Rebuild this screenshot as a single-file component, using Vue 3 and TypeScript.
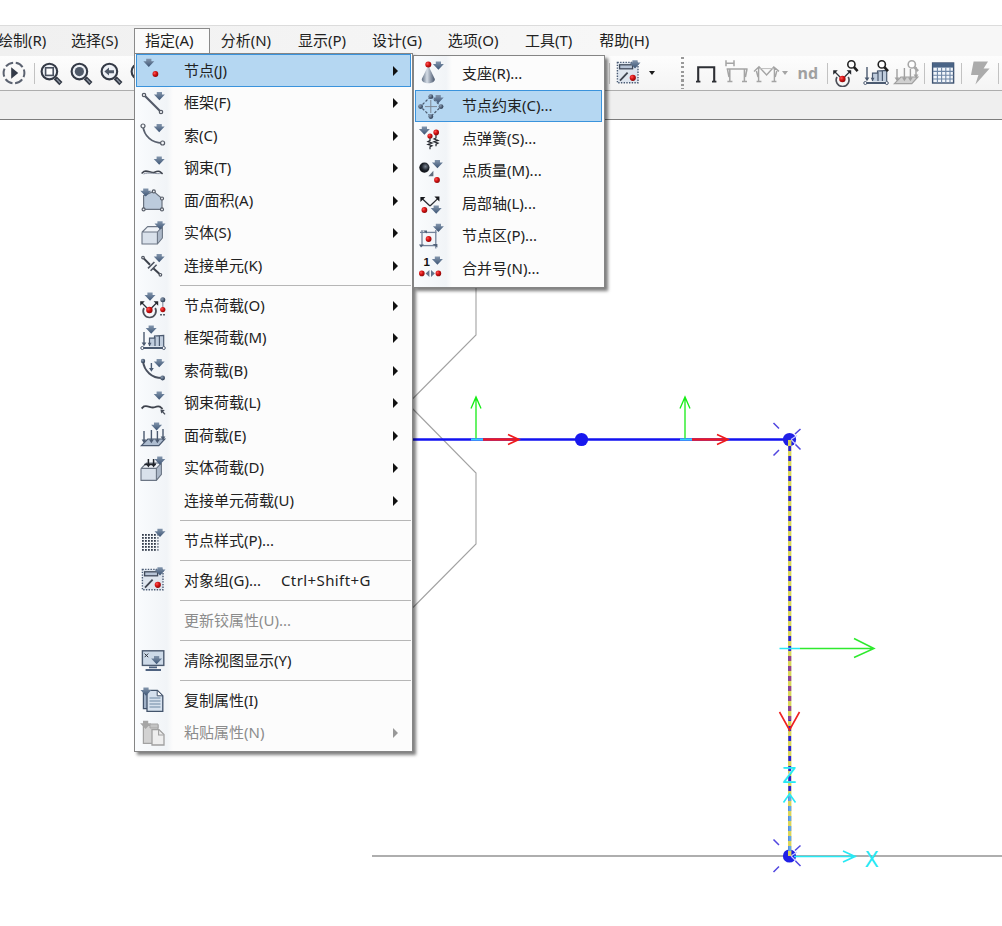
<script setup lang="ts">
import { defineComponent, h } from 'vue'

interface MenuEntry {
  label?: string
  icon?: string
  arrow?: boolean
  active?: boolean
  disabled?: boolean
  shortcut?: string
  separator?: boolean
}

const down = (x: number, y: number, fill = 'url(#arrowFill)'): string =>
  `<path d="M${x - 2.6} ${y - 4}h5.2v2.4h2.9l-5.5 5.8l-5.5-5.8h2.9z" fill="${fill}"/>`
const red = (x: number, y: number, r = 2.9): string =>
  `<circle cx="${x}" cy="${y}" r="${r}" fill="url(#redBall)"/>`
const dark = (x: number, y: number, r = 2.2): string =>
  `<circle cx="${x}" cy="${y}" r="${r}" fill="url(#darkBall)"/>`
const ring = (x: number, y: number, r = 1.7): string =>
  `<circle cx="${x}" cy="${y}" r="${r}" fill="#f4f6f9" stroke="#555b66" stroke-width="1.2"/>`
const line = (d: string, color = '#4c5360', w = 1.4, extra = ''): string =>
  `<path d="${d}" fill="none" stroke="${color}" stroke-width="${w}" ${extra}/>`
const loadArrow = (x: number, y1: number, y2: number, c = '#4b5c74'): string =>
  line(`M${x} ${y1}V${y2 - 2}`, c, 1.4) +
  `<path d="M${x - 2.4} ${y2 - 3.6}h4.8l-2.4 3.8z" fill="${c}"/>`
const lens = (x: number, y: number, c = '#222', r = 3.6): string =>
  `<circle cx="${x}" cy="${y}" r="${r}" fill="#fff" stroke="${c}" stroke-width="1.6"/>` +
  line(`M${x + 2.6} ${y + 2.8}l3.6 4`, c, 2.6)
const zoomLens = (inner: string): string =>
  line('M18.3 19l5.6 5.6', '#343a46', 4.4) +
  line('M19.6 20l3.6 3.8', '#8f97a5', 1.2) +
  `<circle cx="12.4" cy="12.6" r="7.8" fill="#eef1f6" stroke="#343a46" stroke-width="2.1"/>${inner}`

const group =
  '<rect x="3.4" y="3.4" width="20.6" height="20.4" fill="#dfe6ef" stroke="#4a5b74" stroke-width="1.4" stroke-dasharray="1.4 1.3"/>' +
  '<rect x="5.6" y="5.8" width="13" height="4" fill="#b7c4d6" stroke="#414b5b" stroke-width="1.3"/>' +
  line('M6 21.6l7.6-8', '#3e444f', 1.8) + red(18.8, 18.8, 3.1) + down(21, 5.2)

const curve = 'M4 5C5 15 13 22.5 24 22'
const wave = 'M2.6 19.5L5 17.4C9 15.8 12 19.8 15.6 18.2S20 17.4 21 17.7l2.6 2.2'
const jointLoad = (y = 0): string =>
  line(`M5 ${17 + y}a6.4 6.4 0 1 0 11.2 0`, '#4c4f58', 1.7) +
  line(`M8 ${17 + y}L3 ${12 + y}M12.5 ${17 + y}l5-5`, '#30343c', 1.3) +
  `<path d="M1.2 ${10.2 + y}h4.6l-4.6 4.6zM19.2 ${10.2 + y}h-4.6l4.6 4.6z" fill="#24272d"/>` +
  red(10.4, 19 + y, 3.2)

const frameLoad = (c: string, f: string): string =>
  `<path d="M10.5 22.6v-8.8h5v-2.3h9.2v11.1z" fill="${f}"/>` +
  line('M10.5 22V14.2h5V12l9.2-.6V22M16 13v9M20.4 12v10', c, 1.2) +
  loadArrow(5, 8, 22, c) + `<path d="M8.7 18.8h3.8l-1.9 3.4z" fill="${c}"/>` +
  line('M3 24h22', c, 2) +
  `<circle cx="3.3" cy="24" r="1.5" fill="#fff" stroke="${c}"/><circle cx="24.8" cy="24" r="1.5" fill="#fff" stroke="${c}"/>`

const areaLoad = (c: string, f: string): string =>
  `<path d="M2.4 24.6L8.8 18h17l-6 6.6z" fill="${f}" stroke="${c}" stroke-width="1.2"/>` +
  loadArrow(5, 10, 22, c) + loadArrow(12.4, 9, 22, c) + loadArrow(18.4, 10, 22, c) + loadArrow(24, 8, 19, c)

const cube =
  '<path d="M3 13L8.6 7.6H23.4L18.4 13z" fill="#eef2f7"/><path d="M18.4 13L23.4 7.6V19l-5 6z" fill="#adb9c9"/>' +
  '<rect x="3" y="13" width="15.4" height="12" rx="1" fill="#d9e1eb"/>' +
  line('M3 13.4V25h15.4V13H3.2L8.6 7.6H23.4V19l-5 6M18.4 13l5-5.4', '#6b7584', 1.1, 'stroke-linejoin="round"')

const dots = ((): string => {
  let out = ''
  for (let r = 0; r < 6; r++)
    for (let c = 0; c < 6; c++)
      out += `<rect x="${3 + c * 3}" y="${8 + r * 3}" width="1.8" height="1.8" fill="${c === 5 ? '#8d96a2' : '#343d4c'}"/>`
  return out
})()

const icons: Record<string, string> = {
  joint: down(9.8, 6.8) + red(16.4, 18),
  frame: line('M5 6L22 23', '#535a68', 2.2) + ring(5, 6) + ring(22, 23) + down(20.4, 7),
  cable: line(curve, '#59606e', 1.8) + ring(4, 5, 2) + ring(23.6, 22, 2) + down(20.2, 7),
  tendon: line(wave, '#3e434d', 1.6) + line('M4.5 20C9 17.8 18 20.4 22 19.4', '#8991a0', 1) + down(20.2, 6.6),
  area: '<path d="M4.6 23.4V9.6L14.6 5.4L23 12.5V23.4z" fill="#bccbdc" stroke="#69727f" stroke-width="1.2"/>' + ring(4.6, 23.4, 1.5) + ring(14.8, 5.4, 1.5) + ring(23, 12.5, 1.5) + ring(23, 23.4, 1.5) + down(6.8, 6.4),
  solid: cube + down(21, 6.2),
  link: line('M4 6.6L11 13.8M14 17L21.4 23.8', '#3d424c', 2) + line('M9 17.4l6.4-6.4M11.6 19.8l6-6', '#4f5663', 1.6) + ring(4, 6.6, 1.3) + ring(21.4, 23.8, 1.3) + down(20.2, 7),
  jointLoad: jointLoad() + down(11, 5.6) + line('M23.8 9v10', '#9098a5', 1.2) + dark(23.8, 8.8, 2.5) + red(23.8, 18.6, 2.6) + line('M21 23.8h5.6', '#59606b', 1.4, 'stroke-dasharray="2 1"'),
  frameLoad: frameLoad('#4b5a70', '#c0cddd') + down(12.2, 5.6),
  cableLoad: line(curve, '#4a515f', 2) + dark(4, 5, 2.2) + dark(23.6, 22, 2.4) + loadArrow(12.4, 7, 15.6) + down(20.2, 7),
  tendonLoad: line(wave, '#3e434d', 1.8) + line('M26 25.4l-3-3.4', '#444b57', 1.3) + '<path d="M21.4 20.4l4.4.6-3.6 3.6z" fill="#444b57"/>' + down(20.2, 6.6),
  areaLoad: areaLoad('#4b5a70', '#aebdd0') + down(17.6, 5.4),
  solidLoad: `<g transform="translate(-1 1.4)">${cube}</g>` + line('M5.4 10.6h11.4M9.4 5v5M14.6 5v5', '#20242b', 1.5) + '<path d="M6.8 9.4h5.2l-2.6 4.2zM12 9.4h5.2l-2.6 4.2z" fill="#20242b"/>' + down(20.8, 6.6),
  pattern: dots + down(21, 6.8),
  group,
  clear:
    '<rect x="3.4" y="4.8" width="21.4" height="14.6" fill="#cddae8" stroke="#4a596e" stroke-width="1.4"/>' +
    line('M5.6 7.6l3.6 3.6M9.2 7.6l-3.6 3.6', '#2e343e', 1) +
    line('M10 21.4h8M6.6 24h15.4', '#4e6280', 1.8) + down(17.6, 14),
  copy:
    '<path d="M4.4 6h11v16.6h-11z" fill="#9fb0c6" stroke="#42536b" stroke-width="1.2"/>' +
    '<path d="M8 4.4h10.4l5.4 5.4V25.4H8z" fill="#d5e0ed" stroke="#42536b" stroke-width="1.3"/>' +
    line('M10.5 12h11M10.5 15h11M10.5 18h11M10.5 21h11', '#6e87a4', 1.2) + '<path d="M18.2 4.4v5.4h5.6z" fill="#fff" stroke="#42536b"/>' + down(7, 5.6),
  paste:
    '<path d="M4.4 6.4H19v18H4.4z" fill="#d2d2d2" stroke="#a2a2a2" stroke-width="1.2"/><path d="M11 5h8v4h-8z" fill="#c4c4c4" stroke="#a6a6a6"/>' +
    '<path d="M13 10.6h7l5 5V26H13z" fill="#eee" stroke="#a0a0a0" stroke-width="1.3"/>' + line('M19.6 10.6v5.4h5', '#a0a0a0', 1.1) + down(6.6, 5.8, '#a6a6a6'),
  support:
    '<path d="M11.3 6.4L17.8 20C18.6 25.6 4 25.6 4.8 20z" fill="url(#cone)"/>' + red(11.3, 5.6, 3) + down(21.4, 6.6),
  constraint:
    line('M13.8 4.4L24 14.6L13.8 24.6L3.4 14.6z', '#4d5c70', 1.2, 'stroke-dasharray="2.6 1.6"') + line('M13.8 8v13M8 14.6h12', '#7d8793', 1) +
    dark(13.8, 4.6, 2.4) + dark(3.6, 14.6, 2.4) + dark(24, 14.6, 2.4) + dark(13.8, 24.6, 2.4) + down(21.2, 7),
  spring:
    line('M13 13v3.6l-2 1 4 1.4-4 1.4 4 1.4-2 1v2.4M19 9v5l-2 1 4 1.4-4 1.4 4 1.4-2 1v2', '#24272d', 1.2) + red(13, 12, 2.6) + red(19.2, 8.4, 2.8) + down(7.4, 6.6),
  mass: '<circle cx="7.4" cy="10.6" r="5.1" fill="url(#blackBall)"/><path d="M16.4 13.8v5.4h-5z" fill="#5f6b7c"/>' + red(20, 23) + down(20.4, 7),
  axis: line('M13 17L5 9.6M13 17l8-7.6', '#292c32', 1.3) + '<path d="M3.4 8h5l-5 5zM22.4 7.6h-5l5 5z" fill="#16181c"/>' + red(7.4, 21) + down(19.2, 20.6),
  panel:
    '<rect x="5" y="10.4" width="13.8" height="13.2" fill="#f3f6fa" stroke="#74839a" stroke-width="1.3"/>' +
    line('M18.8 23.6v3M5 8v2.4M18.8 8v3M3 10.4h3', '#74839a', 1.2) + '<path d="M2 22.6h5l-3 3zM6 8.4h4v3zM15.4 22h5v3.4z" fill="#516178"/>' + red(11.6, 17) + down(21.4, 5.8),
  merge:
    '<text x="6.4" y="11.6" font-family="Liberation Sans" font-weight="700" font-size="11.5" fill="#111">1</text>' +
    red(4.8, 19.4, 2.8) + red(21.4, 19.4, 2.8) + '<path d="M12.4 16v7l-3.8-3.5zM14 16v7l3.8-3.5z" fill="#62748c"/>' + down(20.4, 6.6),
  play:
    '<circle cx="14" cy="14" r="10.4" fill="none" stroke="#5b6270" stroke-width="2" stroke-dasharray="8.2 2.7" stroke-dashoffset="4"/><path d="M11.2 8.2l7 5.8-7 5.8z" fill="#343b48"/>',
  zoomRect: zoomLens('<rect x="8.6" y="8.8" width="7.6" height="7.6" fill="#fff" stroke="#4b5361" stroke-width="1.6"/>'),
  zoomAll: zoomLens('<circle cx="12.4" cy="12.6" r="4.6" fill="#505a69"/>'),
  zoomBack: zoomLens('<path d="M7.4 12.6l4.6-4v2.6h5v3h-5v2.4z" fill="#505a69"/>'),
  portal: line('M6.2 22V8.2h16V22', '#2d2f34', 2.1) + line('M4 22.6h4.4M20 22.6h4.4', '#2d2f34', 1.6),
  portalGray: line('M4 1.2v6M12 1.2v6M4 4.2h8M4.6 10h21M7.8 10v12M22.4 10v12M5.4 10l1.6 8M25 10l-1.6 8', '#a4a4a4', 1.5) + line('M5.4 22.6h5M20 22.6h5', '#a4a4a4', 1.5),
  momentGray: line('M2 12.4l5-4.6L14.6 16l7.2-8L27 12.4M6.6 8.6v13.4M22.4 8.6v13.4M4.4 12l1.6 6M24.8 12l-1.6 6', '#a4a4a4', 1.4) + line('M7 9.6h15', '#bcbcbc', 1) + line('M4.6 22.6h4.8M19.6 22.6h4.8', '#a4a4a4', 1.5),
  showJoint: jointLoad(1) + lens(19.4, 5.4),
  showFrame: frameLoad('#4b5a70', '#c0cddd') + lens(19.8, 5.4),
  showArea: areaLoad('#a0a0a0', '#d0d0d0') + lens(19.8, 5.4, '#a8a8a8'),
  table:
    '<rect x="3.6" y="4" width="21" height="20" fill="#f2f6fb" stroke="#3d5270" stroke-width="1.4"/><rect x="3.6" y="4" width="21" height="4.6" fill="#4a6486"/>' +
    line('M8.4 8.6V24M12.6 8.6V24M16.8 8.6V24M21 8.6V24M4 12.4h20.4M4 16.2h20.4M4 20h20.4', '#6f87a6', 1.1),
  bolt: '<path d="M7.6 2.4H22L17.6 9.6H23.6L9.4 25.4L12.4 16H5z" fill="#ababab"/>',
}

const Icon = defineComponent({
  props: { name: { type: String, required: true } },
  setup(props) {
    return () => h('svg', { width: 28, height: 28, viewBox: '0 0 28 28', innerHTML: icons[props.name] ?? '' })
  },
})

const menubar: string[] = ['绘制(R)', '选择(S)', '指定(A)', '分析(N)', '显示(P)', '设计(G)', '选项(O)', '工具(T)', '帮助(H)']

const assignMenu: MenuEntry[] = [
  { label: '节点(J)', icon: 'joint', arrow: true, active: true },
  { label: '框架(F)', icon: 'frame', arrow: true },
  { label: '索(C)', icon: 'cable', arrow: true },
  { label: '钢束(T)', icon: 'tendon', arrow: true },
  { label: '面/面积(A)', icon: 'area', arrow: true },
  { label: '实体(S)', icon: 'solid', arrow: true },
  { label: '连接单元(K)', icon: 'link', arrow: true },
  { separator: true },
  { label: '节点荷载(O)', icon: 'jointLoad', arrow: true },
  { label: '框架荷载(M)', icon: 'frameLoad', arrow: true },
  { label: '索荷载(B)', icon: 'cableLoad', arrow: true },
  { label: '钢束荷载(L)', icon: 'tendonLoad', arrow: true },
  { label: '面荷载(E)', icon: 'areaLoad', arrow: true },
  { label: '实体荷载(D)', icon: 'solidLoad', arrow: true },
  { label: '连接单元荷载(U)', arrow: true },
  { separator: true },
  { label: '节点样式(P)...', icon: 'pattern' },
  { separator: true },
  { label: '对象组(G)...', icon: 'group', shortcut: 'Ctrl+Shift+G' },
  { separator: true },
  { label: '更新铰属性(U)...', disabled: true },
  { separator: true },
  { label: '清除视图显示(Y)', icon: 'clear' },
  { separator: true },
  { label: '复制属性(I)', icon: 'copy' },
  { label: '粘贴属性(N)', icon: 'paste', arrow: true, disabled: true },
]

const jointMenu: MenuEntry[] = [
  { label: '支座(R)...', icon: 'support' },
  { label: '节点约束(C)...', icon: 'constraint', active: true },
  { label: '点弹簧(S)...', icon: 'spring' },
  { label: '点质量(M)...', icon: 'mass' },
  { label: '局部轴(L)...', icon: 'axis' },
  { label: '节点区(P)...', icon: 'panel' },
  { label: '合并号(N)...', icon: 'merge' },
]

const localAxes: number[] = [476, 685]
const endNodes: number[] = [439.5, 856]
</script>

<template>
  <div class="window">
    <svg class="defs" width="0" height="0">
      <defs>
        <linearGradient id="arrowFill" x1="0" y1="0" x2="0" y2="1"><stop offset="0" stop-color="#8396ad" /><stop offset="1" stop-color="#3c5474" /></linearGradient>
        <radialGradient id="redBall" cx=".35" cy=".35" r=".7"><stop offset="0" stop-color="#f55" /><stop offset=".5" stop-color="#d31212" /><stop offset="1" stop-color="#8a0808" /></radialGradient>
        <radialGradient id="darkBall" cx=".35" cy=".35" r=".7"><stop offset="0" stop-color="#8b9cb2" /><stop offset="1" stop-color="#26364c" /></radialGradient>
        <radialGradient id="blackBall" cx=".6" cy=".4" r=".6"><stop offset="0" stop-color="#7b8593" /><stop offset=".6" stop-color="#1d222b" /><stop offset="1" stop-color="#0c0f14" /></radialGradient>
        <linearGradient id="cone"><stop offset="0" stop-color="#5f6e82" /><stop offset=".4" stop-color="#d4dce6" /><stop offset="1" stop-color="#46546a" /></linearGradient>
      </defs>
    </svg>

    <div class="caption"></div>
    <nav class="menubar">
      <span v-for="(name, i) in menubar" :key="name" class="top-item" :class="{ open: i === 2 }">{{ name }}</span>
    </nav>
    <div class="toolbar">
      <div class="tools left">
        <Icon name="play" class="tool" />
        <i class="divider"></i>
        <Icon name="zoomRect" class="tool" />
        <Icon name="zoomAll" class="tool" />
        <Icon name="zoomBack" class="tool" />
        <Icon name="zoomAll" class="tool" />
      </div>
      <div class="tools right">
        <i class="divider"></i>
        <Icon name="group" class="tool" />
        <span class="drop"><i class="caret"></i></span>
        <span class="grip"></span>
        <Icon name="portal" class="tool" />
        <Icon name="portalGray" class="tool" />
        <Icon name="momentGray" class="tool" />
        <i class="caret gray"></i>
        <b class="nd">nd</b>
        <i class="divider"></i>
        <Icon name="showJoint" class="tool" />
        <Icon name="showFrame" class="tool" />
        <Icon name="showArea" class="tool" />
        <i class="divider"></i>
        <Icon name="table" class="tool" />
        <i class="divider"></i>
        <Icon name="bolt" class="tool" />
        <i class="divider"></i>
      </div>
    </div>
    <div class="tabstrip"></div>

    <svg class="model" width="1002" height="806" viewBox="0 120 1002 806" fill="none">
      <path d="M476 280V335L408 403.500M408 404L476 473V544L413 607.500" stroke="#a2a2a2" stroke-width="1.1" />
      <path d="M372 856H1002" stroke="#939393" stroke-width="1.5" />
      <path d="M408 439.500H790" stroke="#1212f0" stroke-width="2.500" />
      <circle cx="581.500" cy="439.500" r="6.600" fill="#1818ee" />
      <g v-for="x in localAxes" :key="x">
        <path :d="`M${x} 439V398M${x - 5} 408.500L${x} 397L${x + 5} 408.500`" stroke="#16ec16" stroke-width="1.300" />
        <path :d="`M${x - 5} 439.500H${x + 7}`" stroke="#3cf" stroke-width="2" />
        <path :d="`M${x + 7} 439.500H${x + 42}`" stroke="#ee1822" stroke-width="2.600" />
        <path :d="`M${x + 32} 434.500L${x + 43} 439.500L${x + 32} 444.500`" stroke="#f01818" stroke-width="1.600" />
      </g>
      <g v-for="y in endNodes" :key="y">
        <circle cx="789.500" :cy="y" r="6.600" fill="#2020e6" />
        <path :d="`M791 ${y}L797 ${y - 4}M791 ${y}L796 ${y + 5}`" stroke="#c9c9ff" stroke-width="1.200" />
        <path :d="`M773.500 ${y - 16.500}l5.500 5.500M773.500 ${y + 16}l5.500-5.500M800.500 ${y - 10.500}l-5.500 5M800.500 ${y + 10}l-5-5`" stroke="#5146e0" stroke-width="1.500" />
      </g>
      <path d="M789.700 440V856" stroke="#d9d558" stroke-width="3.400" />
      <path d="M789.700 446V856" stroke="#2a20d8" stroke-width="2.800" stroke-dasharray="5 5" />
      <path d="M789.700 656V720" stroke="#943e91" stroke-width="2.800" stroke-dasharray="5 5" />
      <path d="M789.700 796V851" stroke="#5ba6ec" stroke-width="2.800" stroke-dasharray="5 5" />
      <path d="M779.500 648.500H800" stroke="#27e9f4" stroke-width="1.500" />
      <path d="M800 648.500H874M854 638.500L874 648.500L854 657.500" stroke="#2eea2e" stroke-width="1.500" />
      <path d="M779.500 712L789.500 730L799.500 712" stroke="#f02020" stroke-width="1.600" />
      <path d="M783.500 802.500L789.500 794L795.500 802.500" stroke="#27e9f4" stroke-width="1.600" />
      <path d="M794 856.500H856M843 851L855 856.500L843 862" stroke="#27e9f4" stroke-width="1.700" />
      <text x="782" y="782.500" class="axis">Z</text>
      <text x="864.500" y="866.500" class="axis">X</text>
    </svg>

    <section class="menu main">
      <template v-for="(item, i) in assignMenu" :key="i">
        <div v-if="item.separator" class="sep"></div>
        <div v-else class="row" :class="{ active: item.active, disabled: item.disabled }">
          <Icon v-if="item.icon" :name="item.icon" class="row-icon" />
          <span v-else class="row-icon"></span>
          <span class="label">{{ item.label }}</span>
          <span v-if="item.shortcut" class="shortcut">{{ item.shortcut }}</span>
          <i v-if="item.arrow" class="more"></i>
        </div>
      </template>
    </section>

    <section class="menu sub">
      <div v-for="item in jointMenu" :key="item.label" class="row" :class="{ active: item.active }">
        <Icon :name="item.icon ?? ''" class="row-icon" />
        <span class="label">{{ item.label }}</span>
      </div>
    </section>
  </div>
</template>

<style>
html,
body {
  overflow: hidden;
  background: #fff;
}
</style>

<style scoped>
.window {
  position: relative;
  width: 1002px;
  height: 926px;
  overflow: hidden;
  background: #fff;
  color: #222;
  font: 15px/20px 'Noto Sans', 'Noto Sans CJK SC', sans-serif;
}
.defs {
  position: absolute;
}
.caption {
  height: 25px;
  border-bottom: 1px solid #dcdcdc;
}
.menubar {
  display: flex;
  height: 30px;
  padding-top: 2px;
  box-sizing: border-box;
  background: linear-gradient(90deg, #f0f0f0, #f7f7f7 60%);
}
.top-item {
  flex: none;
  width: 75.7px;
  box-sizing: border-box;
  padding: 2px 0 0 11px;
  white-space: nowrap;
}
.top-item:first-child {
  width: 60px;
  padding-left: 0;
  text-indent: -2px;
}
.top-item:nth-child(2) {
  width: 74px;
}
.top-item:nth-child(5),
.top-item:nth-child(8) {
  padding-left: 12.5px;
}
.top-item.open {
  height: 32px;
  padding: 1px 0 0 10px;
  border: 1px solid #8a8a8a;
  border-bottom: 0;
  background: #fbfbfb;
}
.toolbar {
  display: flex;
  justify-content: space-between;
  height: 35px;
  box-sizing: border-box;
  border-bottom: 1px solid #adadad;
  background: linear-gradient(#fdfdfd, #f4f4f4);
}
.tools {
  display: flex;
  align-items: center;
}
.tool {
  flex: none;
  margin: 0 1px;
}
.divider {
  flex: none;
  width: 1px;
  height: 21px;
  margin: 0 3px;
  background: #c2c2c2;
}
.left .divider {
  margin-right: 1px;
}
.left .tool:first-child {
  margin: 0 3px 0 0;
}
.right {
  width: 396px;
}
.drop {
  display: flex;
  flex: none;
  align-items: center;
  width: 36.5px;
  height: 34px;
  padding-left: 6px;
  box-sizing: border-box;
}
.caret {
  flex: none;
  border: 3.5px solid transparent;
  border-top: 4px solid #1c1c1c;
  border-bottom: 0;
}
.caret.gray {
  margin-left: 1px;
  border-top-color: #a4a4a4;
}
.grip {
  flex: none;
  width: 3px;
  height: 32px;
  margin: 0 7px 0 1px;
  background: repeating-linear-gradient(#999 0 2px, transparent 2px 4.5px);
}
.nd {
  flex: none;
  width: 36.5px;
  padding-left: 4px;
  box-sizing: border-box;
  color: #a0a0a0;
  font-size: 16px;
  text-align: center;
}
.tabstrip {
  height: 28px;
  border-bottom: 1.5px solid #7c7c7c;
  background: #efefef;
}
.model {
  display: block;
}
.axis {
  fill: #27e9f4;
  font-family: 'DejaVu Sans', sans-serif;
  font-size: 21px;
}
.menu {
  position: absolute;
  box-sizing: border-box;
  border: 1px solid #858585;
  background: linear-gradient(90deg, #fafcfe, #f1f4f7 32px, #fcfcfc 38px);
  box-shadow: 3px 3px 3px rgba(0, 0, 0, 0.5);
}
.main {
  left: 134px;
  top: 53px;
  width: 279px;
  height: 699px;
  padding: 0 1px;
}
.sub {
  left: 413px;
  top: 55px;
  width: 192px;
  height: 233px;
  padding: 1px 2px 1px 1px;
}
.row {
  display: flex;
  align-items: center;
  height: 32.5px;
  padding-left: 1.5px;
  box-sizing: border-box;
  border: 1px solid transparent;
  white-space: nowrap;
}
.active {
  border-color: #3a93dc;
  background: #b5d7f2;
}
.row-icon {
  flex: none;
  width: 28px;
  height: 28px;
}
.label {
  margin: -1px 0 0 17.5px;
}
.shortcut {
  margin: -1px 0 0 20px;
  letter-spacing: 0.4px;
}
.more {
  margin: 1px 12px 0 auto;
  border: 5px solid transparent;
  border-left: 5.5px solid #111;
  border-right: 0;
}
.disabled {
  color: #8c8c8c;
}
.disabled .more {
  border-left-color: #999;
}
.sep {
  height: 1px;
  margin: 3.5px 0 3px 44px;
  background: #b6b6b6;
}
.sub .row {
  padding-left: 0.5px;
}
</style>
